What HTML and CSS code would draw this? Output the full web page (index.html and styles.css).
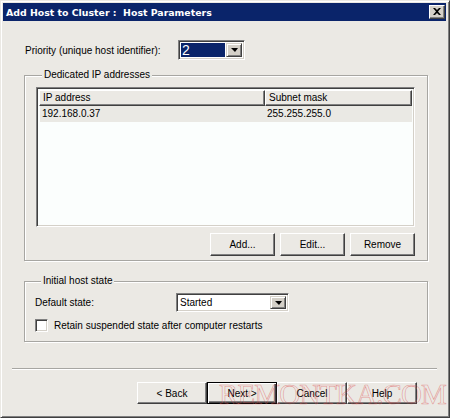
FILE: index.html
```html
<!DOCTYPE html>
<html>
<head>
<meta charset="utf-8">
<link rel="stylesheet" href="styles.css">
</head>
<body>
<div class="window">
  <div class="titlebar">
    <span class="title">Add Host to Cluster :  Host Parameters</span>
    <span class="close">
      <svg width="8" height="7" viewBox="0 0 8 7"><path d="M0 0h2l2 2 2-2h2L5 3.5 8 7H6L4 5 2 7H0l3-3.5z" fill="#000"/></svg>
    </span>
  </div>
  <div class="content">
    <div class="priority-row">
      <span class="label">Priority (unique host identifier):</span>
      <div class="combo small">
        <span class="combo-value selected">2</span>
        <span class="combo-btn"><span class="arrow"></span></span>
      </div>
    </div>

    <fieldset class="group ip-group">
      <legend>Dedicated IP addresses</legend>
      <div class="listview">
        <div class="lv-header">
          <div class="lv-col col-ip">IP address</div>
          <div class="lv-col col-mask">Subnet mask</div>
        </div>
        <div class="lv-row">
          <div class="lv-cell col-ip">192.168.0.37</div>
          <div class="lv-cell col-mask">255.255.255.0</div>
        </div>
      </div>
      <div class="group-buttons">
        <button class="btn">Add...</button>
        <button class="btn">Edit...</button>
        <button class="btn">Remove</button>
      </div>
    </fieldset>

    <fieldset class="group state-group">
      <legend>Initial host state</legend>
      <div class="state-row">
        <span class="label">Default state:</span>
        <div class="combo wide">
          <span class="combo-value">Started</span>
          <span class="combo-btn"><span class="arrow"></span></span>
        </div>
      </div>
      <label class="check-row">
        <span class="checkbox"></span>
        <span>Retain suspended state after computer restarts</span>
      </label>
    </fieldset>
  </div>
  <div class="separator"></div>
  <div class="footer">
    <button class="btn fbtn">&lt; Back</button>
    <button class="btn fbtn default">Next &gt;</button>
    <button class="btn fbtn">Cancel</button>
    <button class="btn fbtn">Help</button>
  </div>
  <div class="watermark">REMONTKA.COM</div>
</div>
</body>
</html>
```

FILE: styles.css
```css
* { box-sizing: border-box; }
html, body { margin: 0; padding: 0; }
body {
  width: 450px;
  height: 418px;
  overflow: hidden;
  background: #ebe9e4;
  font-family: "Liberation Sans", Arial, sans-serif;
  font-size: 10px;
  color: #000;
}
.window {
  position: relative;
  width: 450px;
  height: 418px;
  background: #ebe9e4;
  border-top: 1px solid #ebe9e4;
  border-left: 1px solid #ebe9e4;
  border-right: 1px solid #404040;
  border-bottom: 1px solid #404040;
  box-shadow: inset 1px 1px 0 #fff, inset -1px -1px 0 #808080;
  padding: 2px 3px 3px 2px;
  display: flex;
  flex-direction: column;
}
.titlebar {
  height: 18px;
  background: #0a246a;
  display: flex;
  align-items: center;
  justify-content: space-between;
  padding: 0 1px 0 3px;
}
.title {
  color: #fff;
  font-family: "DejaVu Sans", sans-serif;
  font-weight: bold;
  font-size: 9.4px;
  white-space: pre;
}
.close {
  width: 16px;
  height: 14px;
  background: #d4d0c8;
  border-top: 1px solid #fff;
  border-left: 1px solid #fff;
  border-right: 1px solid #404040;
  border-bottom: 1px solid #404040;
  box-shadow: inset -1px -1px 0 #808080;
  display: flex;
  align-items: center;
  justify-content: center;
  padding-bottom: 1px;
}
.content {
  padding: 19px 18px 0 21px;
  display: flex;
  flex-direction: column;
}
.priority-row {
  display: flex;
  align-items: center;
  height: 20px;
}
.priority-row .label { width: 154px; padding-left: 1px; }
.combo {
  height: 20px;
  display: flex;
  background: #fff;
  border-top: 1px solid #808080;
  border-left: 1px solid #808080;
  border-right: 1px solid #fff;
  border-bottom: 1px solid #fff;
  box-shadow: inset 1px 1px 0 #404040, inset -1px -1px 0 #d4d0c8;
  padding: 2px;
}
.combo.small { width: 67px; }
.combo.wide { width: 113px; }
.combo-value {
  flex: 1;
  display: flex;
  align-items: center;
  padding-left: 1px;
}
.combo-value.selected {
  background: #0a246a;
  color: #fff;
  font-size: 14px;
  margin-right: 1px;
}
.combo-btn {
  width: 16px;
  background: #d4d0c8;
  border-top: 1px solid #d4d0c8;
  border-left: 1px solid #d4d0c8;
  border-right: 1px solid #404040;
  border-bottom: 1px solid #404040;
  box-shadow: inset 1px 1px 0 #fff, inset -1px -1px 0 #808080;
  display: flex;
  align-items: center;
  justify-content: center;
}
.arrow {
  width: 0;
  height: 0;
  border-left: 4px solid transparent;
  border-right: 3px solid transparent;
  border-top: 4px solid #000;
}
.group {
  margin: 0;
  padding: 0;
  border: 1px solid #a7a6a2;
  box-shadow: 1px 1px 0 #fff, inset 1px 1px 0 #fff;
  min-width: 0;
}
.group legend {
  margin-left: 6px;
  padding: 0 2px 0 2px;
  background: #ebe9e4;
  line-height: 12px;
}
.ip-group {
  margin-top: 9px;
  height: 192px;
  padding: 6px 12px 9px 11px;
  display: flex;
  flex-direction: column;
}
.listview {
  height: 140px;
  background: #fbfefd;
  border-top: 1px solid #808080;
  border-left: 1px solid #808080;
  border-right: 1px solid #fff;
  border-bottom: 1px solid #fff;
  box-shadow: inset 1px 1px 0 #404040, inset -1px -1px 0 #d4d0c8;
  padding: 2px;
}
.lv-header {
  display: flex;
  height: 16px;
}
.lv-col {
  background: #ebe9e4;
  border-top: 1px solid #fff;
  border-left: 1px solid #fff;
  border-right: 1px solid #404040;
  border-bottom: 1px solid #404040;
  box-shadow: inset -1px -1px 0 #808080;
  padding-left: 3px;
  line-height: 13px;
}
.col-ip { width: 226px; }
.col-mask { flex: 1; }
.lv-row {
  display: flex;
  height: 16px;
  background: #eae9e4;
  margin-left: 1px;
}
.lv-cell {
  line-height: 15px;
  padding-left: 2px;
}
.lv-row .col-ip { width: 225px; }
.group-buttons {
  margin-top: 6px;
  display: flex;
  justify-content: flex-end;
  gap: 5px;
}
.btn {
  font-family: "Liberation Sans", Arial, sans-serif;
  font-size: 10px;
  color: #000;
  width: 65px;
  height: 23px;
  background: #ebe9e4;
  border-top: 1px solid #fff;
  border-left: 1px solid #fff;
  border-right: 1px solid #404040;
  border-bottom: 1px solid #404040;
  box-shadow: inset -1px -1px 0 #808080;
  padding: 0;
  margin: 0;
}
.state-group {
  margin-top: 14px;
  height: 67px;
  padding: 6px 10px 0 10px;
  display: flex;
  flex-direction: column;
}
.state-row {
  display: flex;
  align-items: center;
  height: 19px;
}
.state-row .label { width: 141px; }
.state-row .combo { height: 19px; }
.check-row {
  display: flex;
  align-items: center;
  gap: 6px;
  margin-top: 7px;
}
.checkbox {
  width: 13px;
  height: 13px;
  background: #fff;
  border-top: 1px solid #808080;
  border-left: 1px solid #808080;
  border-right: 1px solid #fff;
  border-bottom: 1px solid #fff;
  box-shadow: inset 1px 1px 0 #404040, inset -1px -1px 0 #d4d0c8;
}
.separator {
  margin: 26px 9px 0 9px;
  height: 2px;
  border-top: 1px solid #a7a6a2;
  border-bottom: 1px solid #fff;
}
.footer {
  margin-top: 12px;
  display: flex;
  justify-content: flex-end;
  padding-right: 29px;
}
.fbtn {
  width: 70px;
  height: 22px;
}
.fbtn.default {
  border: 1px solid #000;
  box-shadow: inset 1px 1px 0 #fff, inset -1px -1px 0 #404040, inset -2px -2px 0 #808080;
}
.watermark {
  position: absolute;
  left: 218px;
  top: 377px;
  white-space: nowrap;
  font-family: "Liberation Serif", serif;
  font-size: 29px;
  line-height: 32px;
  color: transparent;
  -webkit-text-stroke: 0.6px rgba(220, 80, 80, 0.55);
  letter-spacing: -0.9px;
  pointer-events: none;
}
```
